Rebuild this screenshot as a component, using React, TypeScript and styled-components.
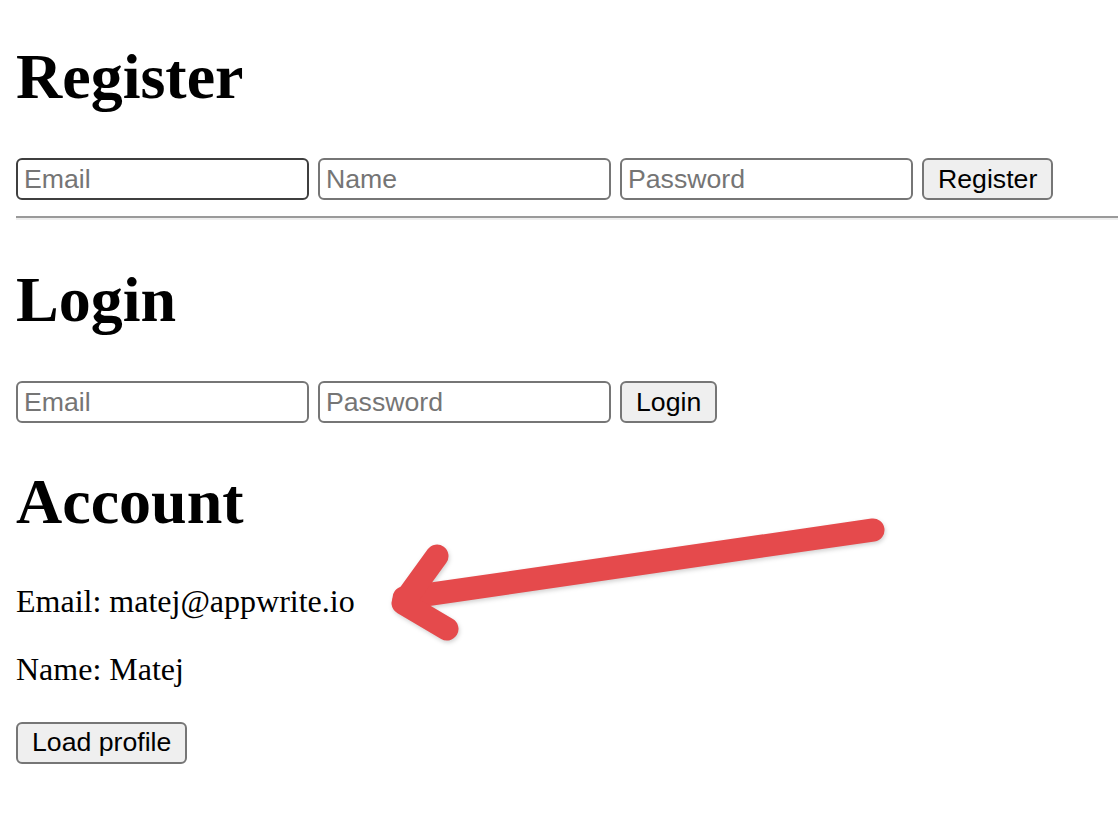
import React from "react";
import styled, { createGlobalStyle } from "styled-components";

const Global = createGlobalStyle`
  html, body { margin: 0; padding: 0; background: #fff; }
  body { font-family: "Liberation Serif", "Times New Roman", serif; color: #000; }
`;

const Page = styled.main`
  position: relative;
  padding: 0 0 0 16px;
  min-height: 824px;
  box-sizing: border-box;
  overflow: hidden;
`;

const Heading = styled.h1<{ $top: number; $bottom: number }>`
  font-family: "Liberation Serif", "Times New Roman", serif;
  font-size: 64px;
  font-weight: 700;
  line-height: 74px;
  margin: ${(p) => p.$top}px 0 ${(p) => p.$bottom}px;
`;

const Row = styled.form`
  display: flex;
  gap: 9px;
  align-items: center;
`;

const Field = styled.input<{ $dark?: boolean }>`
  width: 293px;
  height: 42px;
  box-sizing: border-box;
  border: 2px solid ${(p) => (p.$dark ? "#3f3f3f" : "#767676")};
  border-radius: 6px;
  padding: 0 6px;
  font-family: "Liberation Sans", Arial, sans-serif;
  font-size: 26.67px;
  color: #000;
  background: #fff;
  outline: none;
  &::placeholder { color: #757575; }
`;

const Button = styled.button`
  height: 42px;
  box-sizing: border-box;
  border: 2px solid #767676;
  border-radius: 6px;
  background: #efefef;
  padding: 0 14px;
  font-family: "Liberation Sans", Arial, sans-serif;
  font-size: 26.67px;
  color: #000;
  cursor: pointer;
`;

const Rule = styled.hr`
  margin: 16px 0 0;
  height: 0;
  border: none;
  border-top: 2px solid #9a9a9a;
  border-bottom: 2px solid #eeeeee;
`;

const Text = styled.p<{ $top: number }>`
  font-size: 32px;
  line-height: 36.8px;
  margin: ${(p) => p.$top}px 0 0;
`;

const Actions = styled.div`
  margin-top: 34px;
`;

const Arrow = styled.svg`
  position: absolute;
  left: 0;
  top: 0;
  pointer-events: none;
  filter: drop-shadow(1px 2px 2px rgba(0, 0, 0, 0.18));
`;

export default function App() {
  return (
    <>
      <Global />
      <Page>
        <Heading $top={40} $bottom={44}>Register</Heading>
        <Row onSubmit={(e) => e.preventDefault()}>
          <Field $dark placeholder="Email" />
          <Field placeholder="Name" />
          <Field placeholder="Password" type="password" />
          <Button type="submit">Register</Button>
        </Row>
        <Rule />
        <Heading $top={43} $bottom={44}>Login</Heading>
        <Row onSubmit={(e) => e.preventDefault()}>
          <Field placeholder="Email" />
          <Field placeholder="Password" type="password" />
          <Button type="submit">Login</Button>
        </Row>
        <Heading $top={42} $bottom={0}>Account</Heading>
        <Text $top={44}>Email: matej@appwrite.io</Text>
        <Text $top={31}>Name: Matej</Text>
        <Actions>
          <Button type="button">Load profile</Button>
        </Actions>
        <Arrow width="1118" height="824" viewBox="0 0 1118 824">
          <g fill="none" stroke="#e54a4c" strokeWidth="23" strokeLinecap="round" strokeLinejoin="round">
            <path d="M873 530 L404 598" />
            <path d="M437 556 L403 603 L447 629" />
          </g>
        </Arrow>
      </Page>
    </>
  );
}
